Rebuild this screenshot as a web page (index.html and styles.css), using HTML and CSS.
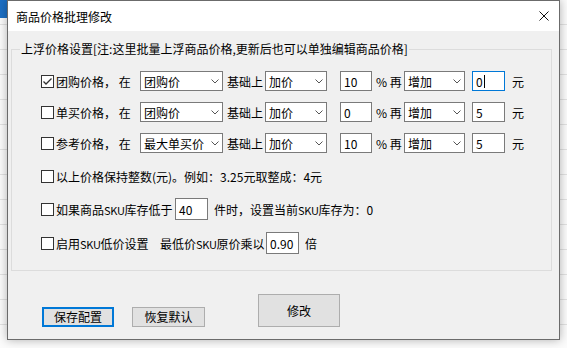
FILE: index.html
```html
<!DOCTYPE html>
<html lang="zh-CN">
<head>
    <meta charset="UTF-8">
    <title>商品价格批理修改</title>
    <link rel="stylesheet" href="styles.css">
</head>
<body>
    <!-- 背后的主窗口 -->
    <div class="desk">
        <div class="desk-bar"></div>
    </div>

    <!-- 对话框 -->
    <div class="dialog">
        <div class="titlebar">
            <span class="title">商品价格批理修改</span>
            <svg class="close" viewBox="0 0 10 10"><path d="M0.5 0.5L9.5 9.5M9.5 0.5L0.5 9.5"/></svg>
        </div>

        <div class="dialog-body">
            <fieldset class="group">
                <legend>上浮价格设置[注:这里批量上浮商品价格,更新后也可以单独编辑商品价格]</legend>

                <div class="row">
                    <span class="check"><svg viewBox="0 0 11 11"><path d="M1.5 5.5L4 8L9.5 2.5"/></svg></span>
                    <span class="lead">团购价格，&nbsp;在</span>
                    <span class="select w83">团购价<svg class="arrow" viewBox="0 0 8 5"><path d="M0.5 0.5L4 4L7.5 0.5"/></svg></span>
                    <span class="mid">基础上</span>
                    <span class="select w62">加价<svg class="arrow" viewBox="0 0 8 5"><path d="M0.5 0.5L4 4L7.5 0.5"/></svg></span>
                    <span class="field pct">10</span>
                    <span class="mid w32">%&nbsp;再</span>
                    <span class="select w61">增加<svg class="arrow" viewBox="0 0 8 5"><path d="M0.5 0.5L4 4L7.5 0.5"/></svg></span>
                    <span class="field amount focus">0<i class="caret"></i></span>
                    <span class="unit">元</span>
                </div>

                <div class="row">
                    <span class="check"></span>
                    <span class="lead">单买价格，&nbsp;在</span>
                    <span class="select w83">团购价<svg class="arrow" viewBox="0 0 8 5"><path d="M0.5 0.5L4 4L7.5 0.5"/></svg></span>
                    <span class="mid">基础上</span>
                    <span class="select w62">加价<svg class="arrow" viewBox="0 0 8 5"><path d="M0.5 0.5L4 4L7.5 0.5"/></svg></span>
                    <span class="field pct">0</span>
                    <span class="mid w32">%&nbsp;再</span>
                    <span class="select w61">增加<svg class="arrow" viewBox="0 0 8 5"><path d="M0.5 0.5L4 4L7.5 0.5"/></svg></span>
                    <span class="field amount">5</span>
                    <span class="unit">元</span>
                </div>

                <div class="row">
                    <span class="check"></span>
                    <span class="lead">参考价格，&nbsp;在</span>
                    <span class="select w83">最大单买价<svg class="arrow" viewBox="0 0 8 5"><path d="M0.5 0.5L4 4L7.5 0.5"/></svg></span>
                    <span class="mid">基础上</span>
                    <span class="select w62">加价<svg class="arrow" viewBox="0 0 8 5"><path d="M0.5 0.5L4 4L7.5 0.5"/></svg></span>
                    <span class="field pct">10</span>
                    <span class="mid w32">%&nbsp;再</span>
                    <span class="select w61">增加<svg class="arrow" viewBox="0 0 8 5"><path d="M0.5 0.5L4 4L7.5 0.5"/></svg></span>
                    <span class="field amount">5</span>
                    <span class="unit">元</span>
                </div>

                <div class="row loose">
                    <span class="check"></span>
                    <span>以上价格保持整数(元)。例如：3.25元取整成：4元</span>
                </div>

                <div class="row loose">
                    <span class="check"></span>
                    <span class="stock-label">如果商品<span class="latin">SKU</span>库存低于</span>
                    <span class="field tall">40</span>
                    <span class="after">件时，设置当前<span class="latin">SKU</span>库存为：0</span>
                </div>

                <div class="row looser">
                    <span class="check"></span>
                    <span class="sku-label">启用<span class="latin">SKU</span>低价设置</span>
                    <span class="rate-label">最低价<span class="latin">SKU</span>原价乘以</span>
                    <span class="field tall">0.90</span>
                    <span class="after">倍</span>
                </div>
            </fieldset>

            <div class="actions">
                <button class="btn primary">保存配置</button>
                <button class="btn reset">恢复默认</button>
                <button class="btn big">修改</button>
            </div>
        </div>
    </div>
</body>
</html>
```

FILE: styles.css
```css
* {
    box-sizing: border-box;
}

body {
    margin: 0;
    width: 567px;
    height: 348px;
    overflow: hidden;
    position: relative;
    font-family: "Noto Sans CJK SC", "Microsoft YaHei", sans-serif;
    font-size: 12px;
    color: #000;
    background: #fff;
}

/* 主窗口背景表格 */
.desk {
    height: 100%;
    background: repeating-linear-gradient(to bottom, #fbfbfb 0 24px, #e2e2e2 24px 25px);
}

.desk-bar {
    width: 60px;
    height: 18px;
    background: #1c6fc4;
}

/* 对话框 */
.dialog {
    position: absolute;
    left: 7px;
    top: 0;
    width: 553px;
    border: 1px solid #6b6b6b;
    background: #f0f0f0;
    box-shadow: 0 0 9px rgba(0, 0, 0, 0.3);
}

.titlebar {
    height: 30px;
    background: #fff;
    display: flex;
    align-items: center;
    justify-content: space-between;
    padding: 0 10px 0 8px;
}

.close {
    width: 10px;
    height: 10px;
    fill: none;
    stroke: #111;
    stroke-width: 1;
}

.dialog-body {
    padding: 11px 7px 12px 3px;
}

.group {
    margin: 0;
    min-width: 0;
    padding: 14px 0 16px 29px;
    border: 1px solid #dcdcdc;
}

.group legend {
    margin-left: -21px;
    padding: 0 1px;
    line-height: 14px;
}

.row {
    display: flex;
    align-items: center;
    height: 22px;
    white-space: nowrap;
}

.row + .row {
    margin-top: 9px;
}

.row.loose {
    margin-top: 11px;
}

.row.looser {
    margin-top: 12px;
}

.latin {
    font-size: 11px;
    letter-spacing: -0.3px;
}

.check {
    flex: none;
    width: 13px;
    height: 13px;
    margin-right: 2px;
    border: 1px solid #333;
    background: #fff;
}

.check svg {
    display: block;
    width: 11px;
    height: 11px;
    fill: none;
    stroke: #333;
    stroke-width: 1.3;
}

.lead {
    width: 84px;
}

.select {
    flex: none;
    display: flex;
    align-items: center;
    justify-content: space-between;
    height: 20px;
    padding: 0 3px 0 3px;
    border: 1px solid #7a7a7a;
    background: #fff;
}

.arrow {
    width: 8px;
    height: 5px;
    fill: none;
    stroke: #555;
    stroke-width: 1;
}

.w83 { width: 83px; }
.w62 { width: 62px; }
.w61 { width: 61px; }

.mid {
    width: 42px;
    padding-left: 4px;
}

.mid.w32 {
    width: 32px;
}

.field {
    flex: none;
    display: flex;
    align-items: center;
    width: 33px;
    height: 20px;
    padding-left: 3px;
    border: 1px solid #7a7a7a;
    background: #fff;
}

.field.pct {
    width: 32px;
    margin-left: 13px;
}

.field.amount {
    margin-left: 7px;
}

.field.tall {
    height: 22px;
}

.field.focus {
    border-color: #0078d7;
}

.caret {
    width: 1px;
    height: 13px;
    margin-left: 1px;
    background: #000;
}

.unit {
    margin-left: 7px;
}

.stock-label {
    width: 119px;
}

.sku-label {
    width: 104px;
}

.rate-label {
    width: 106px;
}

.after {
    margin-left: 6px;
}

/* 底部按钮 */
.actions {
    display: flex;
    align-items: flex-end;
    margin-top: 23px;
    padding-left: 31px;
}

.btn {
    height: 20px;
    padding: 0;
    font-family: inherit;
    font-size: 12px;
    line-height: 1;
    color: #000;
    background: #e1e1e1;
    border: 1px solid #adadad;
}

.btn.primary {
    width: 72px;
    border: 2px solid #0078d7;
}

.btn.reset {
    width: 73px;
    margin-left: 18px;
}

.btn.big {
    width: 82px;
    height: 33px;
    margin-left: 53px;
}
```
